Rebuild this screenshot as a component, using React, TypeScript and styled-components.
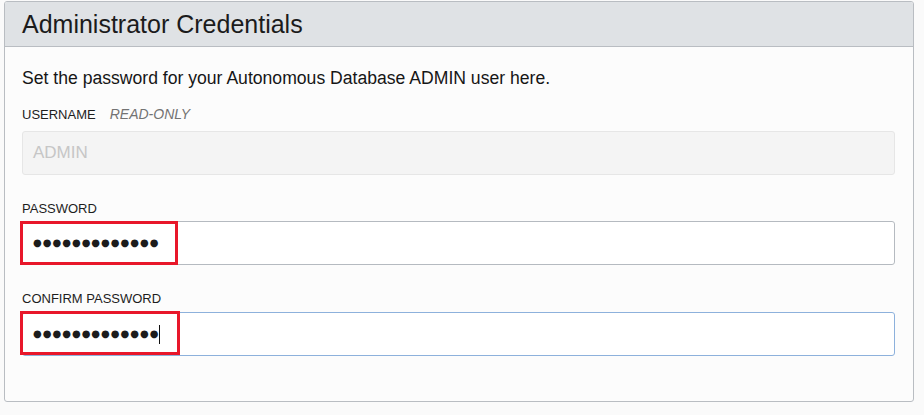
import React from "react";
import styled, { createGlobalStyle } from "styled-components";

const Global = createGlobalStyle`
  html, body {
    margin: 0;
    padding: 0;
    background: #fafafa;
    font-family: "Liberation Sans", Arial, sans-serif;
    color: #161616;
  }
`;

const Page = styled.div`
  padding: 1px 10px 0 4px;
`;

const Panel = styled.section`
  width: 908px;
  border: 1px solid #b9bdc2;
  border-radius: 3px;
  background: #fcfcfc;
  overflow: hidden;
`;

const Header = styled.header`
  height: 44px;
  display: flex;
  align-items: center;
  padding-left: 17px;
  background: #dfe2e5;
  border-bottom: 1px solid #b9bdc2;
`;

const Title = styled.h2`
  margin: 0;
  font-size: 25px;
  font-weight: normal;
  color: #1b1b1b;
`;

const Body = styled.div`
  padding: 21px 18px 45px 17px;
`;

const Intro = styled.p`
  margin: 0 0 18px;
  font-size: 17.6px;
  line-height: 20px;
`;

const Field = styled.div<{ $gap: number }>`
  display: flex;
  flex-direction: column;
  gap: ${(p) => p.$gap}px;
  & + & {
    margin-top: 26px;
  }
`;

const LabelRow = styled.div`
  display: flex;
  align-items: baseline;
  gap: 14px;
  height: 16px;
  line-height: 16px;
`;

const Label = styled.label`
  font-size: 13px;
  color: #1e1e1e;
  text-transform: uppercase;
`;

const Hint = styled.span`
  font-size: 14px;
  font-style: italic;
  color: #737373;
`;

const InputWrap = styled.div`
  position: relative;
`;

const Box = styled.div<{ $tone: "readonly" | "plain" | "focus" }>`
  box-sizing: border-box;
  height: 44px;
  display: flex;
  align-items: center;
  padding: 0 10px;
  border-radius: 3px;
  border: 1px solid
    ${(p) =>
      p.$tone === "readonly" ? "#e6e6e6" : p.$tone === "focus" ? "#8db1dc" : "#b5bac0"};
  background: ${(p) => (p.$tone === "readonly" ? "#f4f4f4" : "#ffffff")};
`;

const ReadOnlyText = styled.span`
  font-size: 17px;
  color: #c6c6c6;
`;

const Dots = styled.span`
  font-family: "DejaVu Sans", sans-serif;
  font-size: 10px;
  letter-spacing: 1px;
  color: #1c1c1c;
  line-height: 1;
`;

const Caret = styled.span`
  display: inline-block;
  width: 1px;
  height: 19px;
  margin-left: 0;
  background: #111;
`;

const Highlight = styled.div<{ $top: number; $width: number; $height: number }>`
  position: absolute;
  left: -2px;
  top: ${(p) => p.$top}px;
  width: ${(p) => p.$width}px;
  height: ${(p) => p.$height}px;
  box-sizing: border-box;
  border: 3px solid #e8172a;
  pointer-events: none;
`;

const mask = "●".repeat(13);

export default function App() {
  return (
    <Page>
      <Global />
      <Panel>
        <Header>
          <Title>Administrator Credentials</Title>
        </Header>
        <Body>
          <Intro>Set the password for your Autonomous Database ADMIN user here.</Intro>

          <Field $gap={9}>
            <LabelRow>
              <Label>Username</Label>
              <Hint>READ-ONLY</Hint>
            </LabelRow>
            <Box $tone="readonly">
              <ReadOnlyText>ADMIN</ReadOnlyText>
            </Box>
          </Field>

          <Field $gap={4}>
            <LabelRow>
              <Label>Password</Label>
            </LabelRow>
            <InputWrap>
              <Box $tone="plain" role="textbox">
                <Dots>{mask}</Dots>
              </Box>
              <Highlight $top={0} $width={158} $height={44} />
            </InputWrap>
          </Field>

          <Field $gap={5}>
            <LabelRow>
              <Label>Confirm Password</Label>
            </LabelRow>
            <InputWrap>
              <Box $tone="focus" role="textbox">
                <Dots>{mask}</Dots>
                <Caret />
              </Box>
              <Highlight $top={-1} $width={160} $height={44} />
            </InputWrap>
          </Field>
        </Body>
      </Panel>
    </Page>
  );
}
